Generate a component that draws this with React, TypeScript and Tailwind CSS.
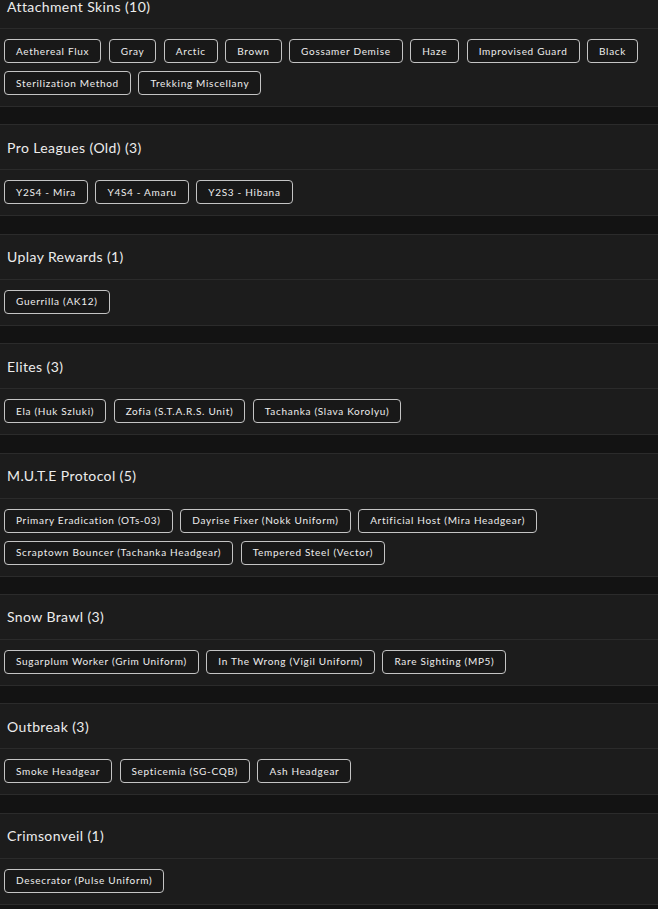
import React from "react";

const sections: { title: string; items: string[] }[] = [
  {
    title: "Attachment Skins (10)",
    items: [
      "Aethereal Flux",
      "Gray",
      "Arctic",
      "Brown",
      "Gossamer Demise",
      "Haze",
      "Improvised Guard",
      "Black",
      "Sterilization Method",
      "Trekking Miscellany",
    ],
  },
  { title: "Pro Leagues (Old) (3)", items: ["Y2S4 - Mira", "Y4S4 - Amaru", "Y2S3 - Hibana"] },
  { title: "Uplay Rewards (1)", items: ["Guerrilla (AK12)"] },
  {
    title: "Elites (3)",
    items: ["Ela (Huk Szluki)", "Zofia (S.T.A.R.S. Unit)", "Tachanka (Slava Korolyu)"],
  },
  {
    title: "M.U.T.E Protocol (5)",
    items: [
      "Primary Eradication (OTs-03)",
      "Dayrise Fixer (Nokk Uniform)",
      "Artificial Host (Mira Headgear)",
      "Scraptown Bouncer (Tachanka Headgear)",
      "Tempered Steel (Vector)",
    ],
  },
  {
    title: "Snow Brawl (3)",
    items: ["Sugarplum Worker (Grim Uniform)", "In The Wrong (Vigil Uniform)", "Rare Sighting (MP5)"],
  },
  { title: "Outbreak (3)", items: ["Smoke Headgear", "Septicemia (SG-CQB)", "Ash Headgear"] },
  { title: "Crimsonveil (1)", items: ["Desecrator (Pulse Uniform)"] },
];

export default function App() {
  return (
    <div
      className="min-h-[909px] w-[658px] overflow-hidden bg-[#131313]"
      style={{ fontFamily: "Lato, 'Open Sans', sans-serif" }}
    >
      <div className="mt-[-17px] flex flex-col gap-[17.4px]">
        {sections.map((s) => (
          <div key={s.title} className="border-y border-[#2b2b2b] bg-[#1c1c1c]">
            <div className="flex h-[45px] items-center border-b border-[#2b2b2b] px-[7px] text-[14px] tracking-[0.4px] text-[#ececec]">
              {s.title}
            </div>
            <div className="flex flex-wrap gap-x-[7.5px] gap-y-2 px-1 pt-[10px] pb-[11px]">
              {s.items.map((it) => (
                <div
                  key={it}
                  className="flex h-6 items-center rounded-[4px] border border-[#c4c4c4] bg-[#181818] px-[11px] text-[10px] tracking-[0.7px] text-[#eeeeee]"
                >
                  {it}
                </div>
              ))}
            </div>
          </div>
        ))}
      </div>
    </div>
  );
}
